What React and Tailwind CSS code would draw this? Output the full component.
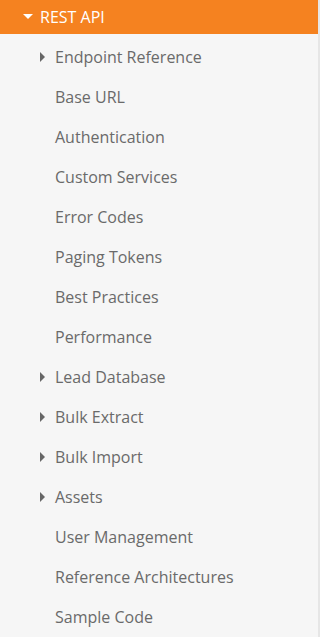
import React from "react";

const items = [
  { label: "Endpoint Reference", arrow: true },
  { label: "Base URL" },
  { label: "Authentication" },
  { label: "Custom Services" },
  { label: "Error Codes" },
  { label: "Paging Tokens" },
  { label: "Best Practices" },
  { label: "Performance" },
  { label: "Lead Database", arrow: true },
  { label: "Bulk Extract", arrow: true },
  { label: "Bulk Import", arrow: true },
  { label: "Assets", arrow: true },
  { label: "User Management" },
  { label: "Reference Architectures" },
  { label: "Sample Code" },
];

export default function App() {
  return (
    <div
      className="w-[320px] h-[637px] bg-[#f6f6f6] border-r-2 border-[#e6e6e6] overflow-hidden"
      style={{ fontFamily: '"Open Sans", "Liberation Sans", sans-serif' }}
    >
      <div className="h-[34px] bg-[#f58220] flex items-center pl-[23px] text-white text-[16px]">
        <svg width="10" height="6" viewBox="0 0 10 6" className="mr-[7px]">
          <polygon points="0,0 10,0 5,5" fill="#ffffff" />
        </svg>
        <span>REST API</span>
      </div>
      <div className="pt-[3px]">
        {items.map((it) => (
          <div key={it.label} className="h-[40px] flex items-center text-[16px] text-[#6a6a6a]">
            <div className="w-[55px] flex justify-end pr-[9px]">
              {it.arrow && (
                <svg width="6" height="10" viewBox="0 0 6 10">
                  <polygon points="0,0 5,5 0,10" fill="#666666" />
                </svg>
              )}
            </div>
            <span>{it.label}</span>
          </div>
        ))}
      </div>
    </div>
  );
}
